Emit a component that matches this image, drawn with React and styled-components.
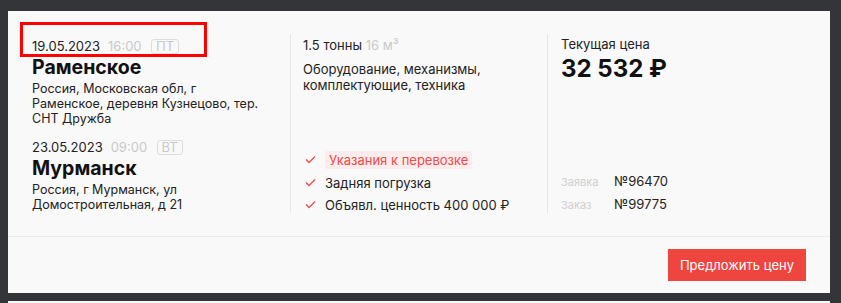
import React from "react";
import styled, { createGlobalStyle } from "styled-components";

const Global = createGlobalStyle`
  html, body { margin: 0; padding: 0; background: #343539; }
  body { font-family: Inter, "Noto Sans", sans-serif; color: #1d1d1f; }
`;

const Page = styled.div`
  padding: 11px 11px 0 8px;
  display: flex;
  flex-direction: column;
  gap: 8px;
`;

const Card = styled.div`
  position: relative;
  background: #f9f9f9;
  display: flex;
  flex-direction: column;
`;

const Body = styled.div`
  display: grid;
  grid-template-columns: 282px 257px 1fr;
  padding: 23px 0;
  border-bottom: 1px solid #ebebeb;
`;

const Column = styled.div`
  display: flex;
  flex-direction: column;
  justify-content: ${(p) => (p.$spread ? "space-between" : "flex-start")};
  padding-left: ${(p) => p.$pl}px;
  border-left: ${(p) => (p.$divider ? "1px solid #e6e6e6" : "none")};
  height: 179px;
  box-sizing: border-box;
`;

const Point = styled.div`
  display: flex;
  flex-direction: column;
  margin-top: ${(p) => p.$mt || 0}px;
`;

const DateRow = styled.div`
  display: flex;
  align-items: center;
  gap: 8px;
  font-size: 13px;
  line-height: 20px;
  margin-top: 2px;
  color: #222;
`;

const Muted = styled.span`
  color: #c9c9c9;
`;

const Day = styled.span`
  border: 1px solid #dcdcdc;
  border-radius: 3px;
  color: #c9c9c9;
  font-size: 13px;
  line-height: 13px;
  padding: 0 4px;
  margin-left: 1.5px;
`;

const City = styled.div`
  font-size: 19.5px;
  font-weight: 700;
  line-height: 20px;
  margin-top: 1px;
  color: #111;
`;

const Address = styled.div`
  font-size: 12.5px;
  line-height: 15px;
  margin-top: 4px;
  color: #222;
`;

const Text = styled.div`
  font-size: 13px;
  line-height: 16px;
  color: #222;
  margin-top: ${(p) => p.$mt || 0}px;
`;

const Checks = styled.ul`
  list-style: none;
  margin: 0 0 -1px 0;
  padding: 0 0 0 2px;
  display: flex;
  flex-direction: column;
  gap: 4.5px;
`;

const CheckItem = styled.li`
  display: flex;
  align-items: flex-start;
  gap: 9px;
  font-size: 13px;
  line-height: 18px;
  color: #222;

  svg {
    margin-top: 4px;
    flex: none;
  }
`;

const Pill = styled.span`
  background: #fcecec;
  color: #ef4b4b;
  border-radius: 2px;
  padding: 0 4px;
`;

const PriceLabel = styled.div`
  font-size: 13px;
  line-height: 16px;
  color: #222;
  margin-top: 2px;
`;

const Price = styled.div`
  font-size: 24px;
  font-weight: 700;
  line-height: 28px;
  margin-top: 3px;
  color: #111;
`;

const Meta = styled.div`
  display: grid;
  grid-template-columns: 53px auto;
  row-gap: 6.5px;
  align-items: baseline;
`;

const MetaLabel = styled.span`
  font-size: 11px;
  line-height: 16px;
  color: #cfcfcf;
`;

const MetaValue = styled.span`
  font-size: 13px;
  line-height: 16px;
  color: #222;
`;

const Footer = styled.div`
  display: flex;
  justify-content: flex-end;
  padding: 12px 24px 12px 0;
`;

const Button = styled.button`
  background: #ef453f;
  color: #fff;
  border: none;
  border-radius: 0;
  font-family: inherit;
  font-size: 13px;
  height: 32px;
  width: 138px;
  padding: 0;
  cursor: pointer;
`;

const Highlight = styled.div`
  position: absolute;
  left: 12px;
  top: 11px;
  width: 187px;
  height: 35px;
  box-sizing: border-box;
  border: 3px solid #f00;
  pointer-events: none;
`;

const NextCard = styled.div`
  background: #f9f9f9;
  height: 2px;
`;

const Check = () => (
  <svg width="11" height="9" viewBox="0 0 11 9" fill="none">
    <polyline points="1,4.5 4,7.5 10,1.5" stroke="#ef4b4b" strokeWidth="1.3" />
  </svg>
);

export default function App() {
  return (
    <>
      <Global />
      <Page>
        <Card>
          <Body>
            <Column $pl={24}>
              <Point>
                <DateRow>
                  <span>19.05.2023</span>
                  <Muted>16:00</Muted>
                  <Day>ПТ</Day>
                </DateRow>
                <City>Раменское</City>
                <Address>
                  Россия, Московская обл, г<br />
                  Раменское, деревня Кузнецово, тер.
                  <br />
                  СНТ Дружба
                </Address>
              </Point>
              <Point $mt={9}>
                <DateRow>
                  <span>23.05.2023</span>
                  <Muted>09:00</Muted>
                  <Day>ВТ</Day>
                </DateRow>
                <City>Мурманск</City>
                <Address>
                  Россия, г Мурманск, ул
                  <br />
                  Домостроительная, д 21
                </Address>
              </Point>
            </Column>
            <Column $pl={12} $divider $spread>
              <div>
                <Text $mt={3}>
                  1.5 тонны <Muted>16 м³</Muted>
                </Text>
                <Text $mt={8}>
                  Оборудование, механизмы,
                  <br />
                  комплектующие, техника
                </Text>
              </div>
              <Checks>
                <CheckItem>
                  <Check />
                  <Pill>Указания к перевозке</Pill>
                </CheckItem>
                <CheckItem>
                  <Check />
                  <span>Задняя погрузка</span>
                </CheckItem>
                <CheckItem>
                  <Check />
                  <span>Объявл. ценность 400 000 ₽</span>
                </CheckItem>
              </Checks>
            </Column>
            <Column $pl={13} $divider $spread>
              <div>
                <PriceLabel>Текущая цена</PriceLabel>
                <Price>32 532 ₽</Price>
              </div>
              <Meta>
                <MetaLabel>Заявка</MetaLabel>
                <MetaValue>№96470</MetaValue>
                <MetaLabel>Заказ</MetaLabel>
                <MetaValue>№99775</MetaValue>
              </Meta>
            </Column>
          </Body>
          <Footer>
            <Button>Предложить цену</Button>
          </Footer>
          <Highlight />
        </Card>
        <NextCard />
      </Page>
    </>
  );
}
